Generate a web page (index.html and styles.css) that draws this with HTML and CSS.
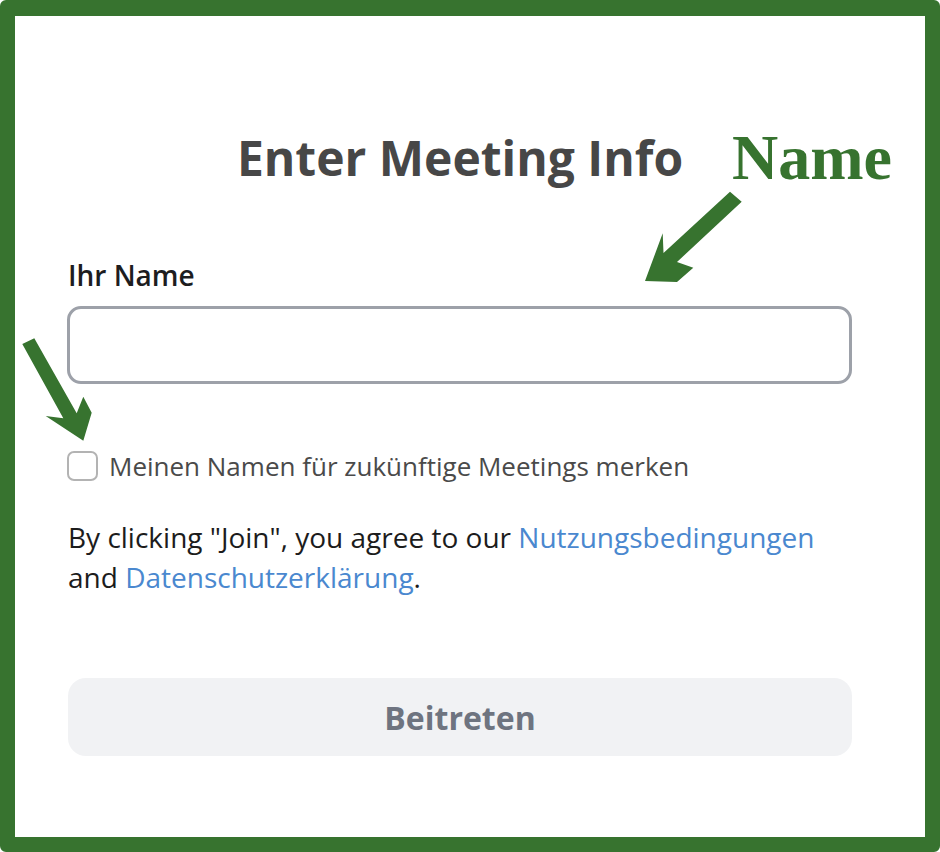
FILE: index.html
```html
<!DOCTYPE html>
<html>
<head>
    <title>Enter Meeting Info</title>
    <link rel="stylesheet" href="styles.css">
</head>
<body>
    <div class="frame">
        <div class="form">
            <h1 class="title">Enter Meeting Info</h1>

            <label class="field-label" for="inputname">Ihr Name</label>
            <input class="text-input" type="text" id="inputname">

            <label class="remember">
                <input class="check" type="checkbox">
                <span>Meinen Namen für zukünftige Meetings merken</span>
            </label>

            <p class="terms">By clicking "Join", you agree to our <a href="#">Nutzungsbedingungen</a><br>and <a href="#">Datenschutzerklärung</a>.</p>

            <button class="join" disabled>Beitreten</button>
        </div>

        <!-- annotations drawn over the form -->
        <div class="note">Name</div>
        <svg class="arrows" width="940" height="852" viewBox="0 0 940 852">
            <polygon points="730,191.7 741.7,201.7 677,262 693.3,267.7 677,282 645,281 662.7,233.3 663.5,253"/>
            <polygon points="22.3,344 34.3,338.3 76.7,413.3 83.3,396.7 91.7,412.7 83.3,440.7 45.7,416 63.3,418.3"/>
        </svg>
    </div>
</body>
</html>
```

FILE: styles.css
```css
html, body {
    margin: 0;
    background-color: #fff;
}

.frame {
    position: relative;
    box-sizing: border-box;
    width: 940px;
    height: 852px;
    border: 15px solid #37732f;
    border-top-width: 16px;
    border-radius: 6px;
    background-color: #fff;
}

.form {
    width: 784px;
    margin-left: 53px;
    padding-top: 114px;
    font-family: 'Open Sans', sans-serif;
}

.title {
    margin: 0;
    font-size: 48px;
    line-height: 56px;
    font-weight: 700;
    color: #474747;
    text-align: center;
}

.field-label {
    display: block;
    margin-top: 71px;
    font-size: 28px;
    line-height: 36px;
    font-weight: 600;
    color: #1d1d1f;
}

.text-input {
    display: block;
    box-sizing: border-box;
    width: 785px;
    height: 78px;
    margin: 13px 0 0 -1px;
    border: 3px solid #9da1a9;
    border-radius: 14px;
    background-color: #fff;
    font-family: inherit;
    font-size: 24px;
    padding: 0 16px;
}

.remember {
    display: flex;
    align-items: center;
    gap: 11px;
    margin: 67px 0 0 -1px;
    height: 30px;
    font-size: 26px;
    line-height: 30px;
    color: #4a4a4a;
}

.check {
    appearance: none;
    box-sizing: border-box;
    width: 31px;
    height: 30px;
    margin: 0;
    border: 2px solid #b3b3b3;
    border-radius: 7px;
    background-color: #fff;
}

.terms {
    margin: 36px 0 0 0;
    font-size: 28px;
    line-height: 40px;
    color: #1c1c1c;
}

.terms a {
    color: #4a88cf;
    text-decoration: none;
}

.join {
    display: block;
    width: 784px;
    height: 78px;
    margin-top: 81px;
    border: none;
    border-radius: 18px;
    background-color: #f1f2f4;
    color: #6e7480;
    font-family: 'Open Sans', sans-serif;
    font-size: 32px;
    font-weight: 700;
}

.note {
    position: absolute;
    left: 717px;
    top: 102px;
    font-family: 'Liberation Serif', serif;
    font-size: 64px;
    font-weight: 700;
    line-height: 80px;
    color: #37732f;
}

.arrows {
    position: absolute;
    left: -15px;
    top: -16px;
    pointer-events: none;
}

.arrows polygon {
    fill: #37732f;
}
```
